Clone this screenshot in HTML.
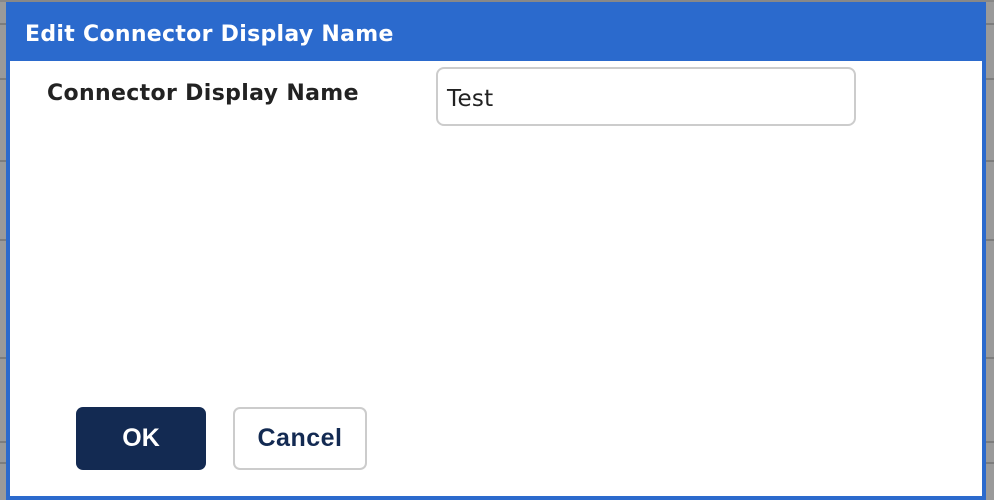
<!DOCTYPE html>
<html><head><style>
*{margin:0;padding:0;box-sizing:border-box}
body{width:994px;height:500px;overflow:hidden;background:#9a9a9a;font-family:"Liberation Sans",sans-serif;position:relative}
.bgl{position:absolute;left:0;width:994px;height:2px;background:#7d7d7d}
.dlg{position:absolute;left:6px;top:2px;width:980px;height:498px;background:#2b6acd}
.hdr{position:absolute;left:19px;top:20px;color:#fff;font-family:"DejaVu Sans",sans-serif;font-size:22px;font-weight:bold;letter-spacing:0.3px}
.body{position:absolute;background:#fff}
.lbl{position:absolute;left:47px;top:81px;font-family:"DejaVu Sans",sans-serif;font-size:22px;font-weight:bold;color:#222;letter-spacing:0.35px}
.inp{position:absolute;left:436px;top:67px;width:420px;height:59px;border:2px solid #ccc;border-radius:8px;background:#fff;font-family:"DejaVu Sans",sans-serif;font-size:23px;color:#222;padding:17px 0 0 9px;letter-spacing:0.3px}
.btn{position:absolute;top:407px;height:63px;border-radius:7px;font-size:25px;font-weight:bold;text-align:center;line-height:63px}
.ok{left:76px;width:130px;background:#132a52;color:#fff}
.cn{left:233px;width:134px;background:#fff;border:2px solid #ccc;color:#132a52;line-height:59px;letter-spacing:0.5px}
</style></head><body>
<div class="bgl" style="top:0;background:#888"></div>
<div class="bgl" style="top:23px"></div>
<div class="bgl" style="top:78px"></div>
<div class="bgl" style="top:160px"></div>
<div class="bgl" style="top:239px"></div>
<div class="bgl" style="top:357px"></div>
<div class="bgl" style="top:441px"></div>
<div class="bgl" style="top:462px"></div>
<div class="dlg">
<div class="hdr">Edit Connector Display Name</div>
</div>
<div class="body" style="left:10px;top:61px;width:972px;height:435px"></div>
<div class="lbl">Connector Display Name</div>
<div class="inp">Test</div>
<div class="btn ok">OK</div>
<div class="btn cn">Cancel</div>
</body></html>
